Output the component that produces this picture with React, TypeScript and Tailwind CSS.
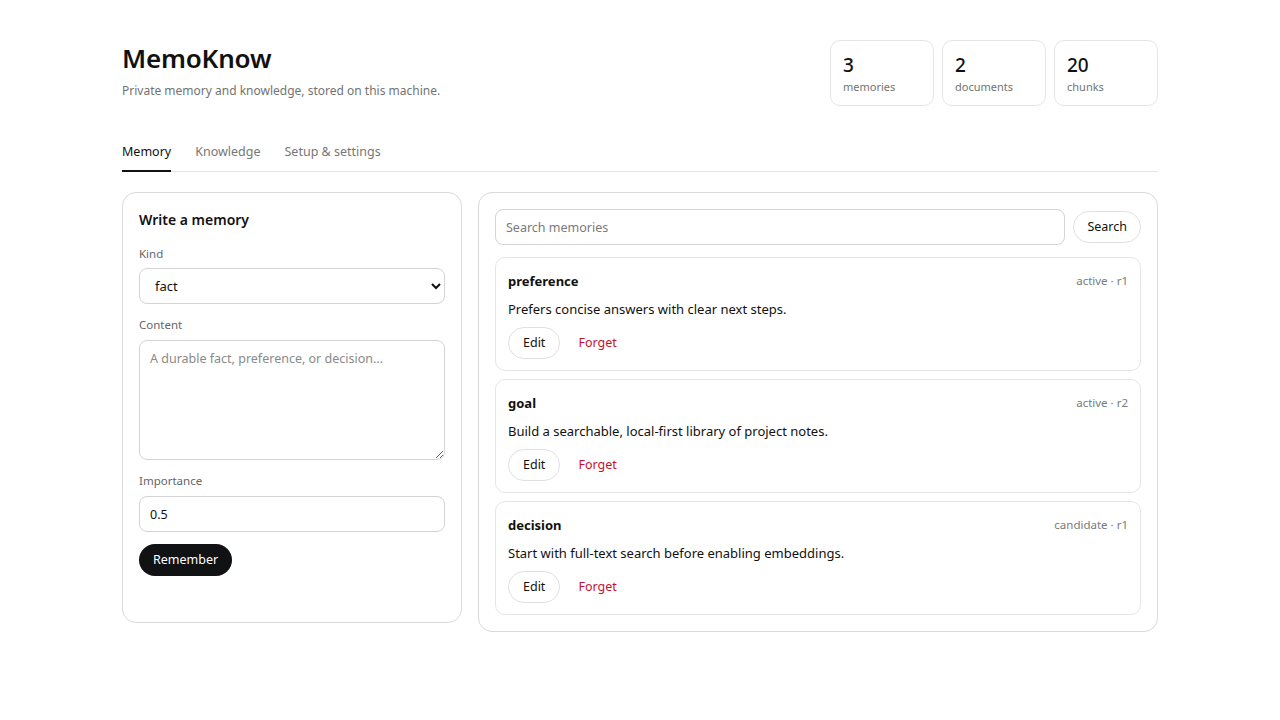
import React from "react";

const memories = [
  { kind: "preference", meta: "active · r1", text: "Prefers concise answers with clear next steps." },
  { kind: "goal", meta: "active · r2", text: "Build a searchable, local-first library of project notes." },
  { kind: "decision", meta: "candidate · r1", text: "Start with full-text search before enabling embeddings." },
];

const stats = [
  { n: "3", l: "memories" },
  { n: "2", l: "documents" },
  { n: "20", l: "chunks" },
];

export default function App() {
  return (
    <div
      className="min-h-[720px] bg-white text-[#111111]"
      style={{ fontFamily: '"Noto Sans", "Open Sans", sans-serif' }}
    >
      <div className="mx-auto w-[1036px] pt-10">
        <header className="flex items-start justify-between">
          <div>
            <h1 className="text-[26px] font-semibold leading-[36px] tracking-[-0.2px]">MemoKnow</h1>
            <p className="mt-[5px] text-[12px] leading-5 text-[#737373]">
              Private memory and knowledge, stored on this machine.
            </p>
          </div>
          <div className="flex gap-2">
            {stats.map((s) => (
              <div
                key={s.l}
                className="h-[66px] w-[104px] rounded-[10px] border border-[#e5e5e5] px-[12px] pt-[10px]"
              >
                <div className="text-[19px] font-medium leading-[28px]">{s.n}</div>
                <div className="text-[11px] leading-[16px] text-[#737373]">{s.l}</div>
              </div>
            ))}
          </div>
        </header>

        <nav className="mt-9 flex gap-6 border-b border-[#e5e5e5]">
          <button className="-mb-px border-b-2 border-[#111111] pb-2 text-[12.5px] leading-5 text-[#111111]">
            Memory
          </button>
          <button className="-mb-px border-b-2 border-transparent pb-2 text-[12.5px] leading-5 text-[#777777]">
            Knowledge
          </button>
          <button className="-mb-px border-b-2 border-transparent pb-2 text-[12.5px] leading-5 text-[#777777]">
            Setup &amp; settings
          </button>
        </nav>

        <div className="mt-5 flex items-start gap-4">
          <section className="w-[340px] rounded-[14px] border border-[#d9d9d9] p-4 pb-[46px]">
            <h2 className="pt-px text-[14px] font-semibold leading-5">Write a memory</h2>
            <div className="mt-[15px] flex flex-col">
              <label className="text-[11.5px] leading-[18px] text-[#666666]">Kind</label>
              <select
                defaultValue="fact"
                className="mt-[5px] h-9 w-full rounded-[8px] border border-[#d4d4d4] bg-white px-[11px] text-[13px] text-[#111111]"
              >
                <option value="fact">fact</option>
                <option value="preference">preference</option>
                <option value="goal">goal</option>
                <option value="decision">decision</option>
              </select>

              <label className="mt-3 text-[11.5px] leading-[18px] text-[#666666]">Content</label>
              <textarea
                placeholder="A durable fact, preference, or decision..."
                className="mt-1.5 h-[120px] w-full rounded-[8px] border border-[#d4d4d4] px-[10px] py-[8px] text-[12.5px] leading-5 placeholder:text-[#8a8a8a]"
              />

              <label className="mt-3 text-[11.5px] leading-[18px] text-[#666666]">Importance</label>
              <input
                defaultValue="0.5"
                className="mt-1.5 h-9 w-full rounded-[8px] border border-[#d4d4d4] px-[10px] text-[12.5px] text-[#111111]"
              />

              <div className="mt-3">
                <button className="h-8 rounded-full bg-[#111214] px-[14px] text-[12.5px] text-white">
                  Remember
                </button>
              </div>
            </div>
          </section>

          <section className="flex-1 rounded-[14px] border border-[#d9d9d9] p-4">
            <div className="flex items-center gap-2">
              <input
                placeholder="Search memories"
                className="h-9 flex-1 rounded-[8px] border border-[#d4d4d4] px-[10px] text-[12.5px] placeholder:text-[#7a7a7a]"
              />
              <button className="h-8 rounded-full border border-[#e0e0e0] px-[13px] text-[12.5px] text-[#111111]">
                Search
              </button>
            </div>
            <div className="mt-3 flex flex-col gap-2">
              {memories.map((m) => (
                <div key={m.kind} className="rounded-[10px] border border-[#e5e5e5] px-3 pb-[11px] pt-[13px]">
                  <div className="flex items-center justify-between">
                    <span className="text-[13px] font-bold leading-5">{m.kind}</span>
                    <span className="text-[11.5px] leading-5 text-[#7a7a7a]">{m.meta}</span>
                  </div>
                  <p className="mt-2 text-[13px] leading-5 text-[#111111]">{m.text}</p>
                  <div className="mt-2 flex items-center gap-2">
                    <button className="h-8 rounded-full border border-[#e0e0e0] px-[14px] text-[12.5px] text-[#111111]">
                      Edit
                    </button>
                    <button className="h-8 px-[10px] text-[12.5px] text-[#c8102e]">Forget</button>
                  </div>
                </div>
              ))}
            </div>
          </section>
        </div>
      </div>
    </div>
  );
}
